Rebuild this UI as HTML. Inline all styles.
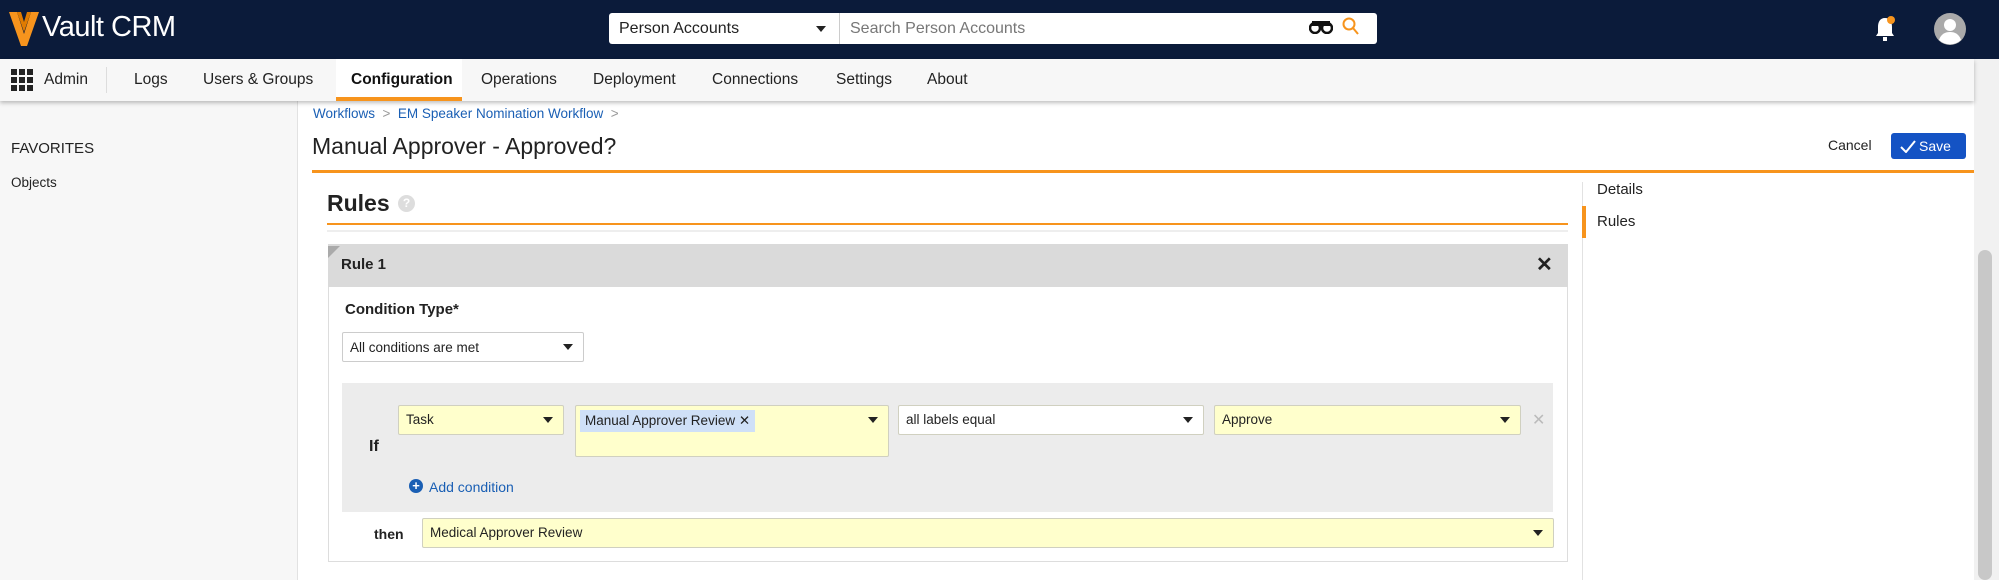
<!DOCTYPE html>
<html><head><meta charset="utf-8"><style>
*{box-sizing:border-box;margin:0;padding:0}
body{width:1999px;height:580px;overflow:hidden;background:#fff;font-family:"Liberation Sans",Arial,sans-serif;color:#222;position:relative}
.a{position:absolute}
.top{left:0;top:0;width:1999px;height:59px;background:#0b1b3a}
.nav{left:0;top:59px;width:1974px;height:42px;background:#f7f7f7;box-shadow:0 2px 4px rgba(0,0,0,.25);z-index:2}
.nav span{position:absolute;top:12px;font-size:15.5px;color:#222}
.sel{background:#ffffcc;border:1px solid #d0d0c0;border-radius:2px;font-size:13.5px;padding:6px 7px}
.sel .ar,.ar{position:absolute;right:10px;top:11px;width:0;height:0;border-left:5px solid transparent;border-right:5px solid transparent;border-top:6px solid #222}
</style></head><body>
<div class="a top"></div>
<svg class="a" style="left:9px;top:12px" width="30" height="34" viewBox="0 0 30 34"><path d="M0 0h8l7 22 7-22h8L18 34h-6z" fill="#f7941d"/><path d="M8 0h4l3 10 3-10h4l-7 20z" fill="#e07b00"/></svg>
<div class="a" style="left:42px;top:11px;font-size:29px;color:#fff;letter-spacing:-0.5px"><span>Vault</span><span style="font-weight:300"> CRM</span></div>
<div class="a" style="left:609px;top:13px;width:768px;height:31px;background:#fff;border-radius:3px"></div>
<div class="a" style="left:839px;top:13px;width:1px;height:31px;background:#ccc"></div>
<div class="a" style="left:619px;top:20px;font-size:16px;color:#222">Person Accounts</div>
<div class="a ar" style="left:816px;top:26px"></div>
<div class="a" style="left:850px;top:20px;font-size:16px;color:#777">Search Person Accounts</div>
<svg class="a" style="left:1309px;top:20px" width="24" height="14" viewBox="0 0 24 14"><circle cx="6" cy="8" r="5" fill="none" stroke="#111" stroke-width="2.5"/><circle cx="18" cy="8" r="5" fill="none" stroke="#111" stroke-width="2.5"/><rect x="3" y="1" width="18" height="5" fill="#111"/></svg>
<svg class="a" style="left:1342px;top:17px" width="18" height="20" viewBox="0 0 18 20"><circle cx="7" cy="7" r="5.5" fill="none" stroke="#f7941d" stroke-width="2"/><path d="M11 11l5 6" stroke="#f7941d" stroke-width="2"/></svg>
<svg class="a" style="left:1873px;top:15px" width="24" height="28" viewBox="0 0 24 28"><path d="M12 3c-5 0-7 4-7 9v6l-2 3h18l-2-3v-6c0-5-2-9-7-9z" fill="#fff"/><rect x="10" y="22" width="4" height="4" fill="#fff"/><circle cx="18" cy="5" r="4" fill="#f7941d"/></svg>
<svg class="a" style="left:1934px;top:13px" width="32" height="32" viewBox="0 0 32 32"><circle cx="16" cy="16" r="16" fill="#aaa"/><circle cx="16" cy="12" r="6" fill="#fff"/><path d="M5 27c2-6 6-8 11-8s9 2 11 8a16 16 0 0 1-22 0z" fill="#fff"/></svg>

<div class="a nav">
<svg style="position:absolute;left:11px;top:10px" width="23" height="23" viewBox="0 0 23 23" fill="#222"><rect x="0" y="0" width="6" height="6"/><rect x="8" y="0" width="6" height="6"/><rect x="16" y="0" width="6" height="6"/><rect x="0" y="8" width="6" height="6"/><rect x="8" y="8" width="6" height="6"/><rect x="16" y="8" width="6" height="6"/><rect x="0" y="16" width="6" height="6"/><rect x="8" y="16" width="6" height="6"/><rect x="16" y="16" width="6" height="6"/></svg>
<span style="left:44px">Admin</span>
<div style="position:absolute;left:106px;top:8px;width:1px;height:26px;background:#ddd"></div>
<span style="left:134px">Logs</span>
<span style="left:203px">Users &amp; Groups</span>
<div style="position:absolute;left:336px;top:0;width:126px;height:42px;background:#fff;border-bottom:4px solid #f7941d"></div>
<span style="left:351px;font-weight:bold;color:#111">Configuration</span>
<span style="left:481px">Operations</span>
<span style="left:593px">Deployment</span>
<span style="left:712px">Connections</span>
<span style="left:836px">Settings</span>
<span style="left:927px">About</span>
</div>
<div class="a" style="left:1974px;top:59px;width:25px;height:521px;background:#f1f1f1"></div>
<div class="a" style="left:1978px;top:250px;width:14px;height:330px;background:#c8c8c8;border-radius:7px"></div>

<div class="a" style="left:0;top:101px;width:298px;height:479px;background:#f7f7f7;border-right:1px solid #e2e2e2"></div>
<div class="a" style="left:11px;top:140px;font-size:15px">FAVORITES</div>
<div class="a" style="left:11px;top:175px;font-size:13.5px">Objects</div>

<div class="a" style="left:313px;top:106px;font-size:13.5px;color:#1a5fb4">Workflows <span style="color:#999">&nbsp;&gt;&nbsp;</span> EM Speaker Nomination Workflow <span style="color:#999">&nbsp;&gt;</span></div>
<div class="a" style="left:312px;top:133px;font-size:23px;color:#222">Manual Approver - Approved?</div>
<div class="a" style="left:1828px;top:137px;font-size:14px">Cancel</div>
<div class="a" style="left:1891px;top:133px;width:75px;height:26px;background:#1453c4;border-radius:3px;color:#fff;font-size:14px;padding:5px 0 0 28px">Save</div>
<svg class="a" style="left:1900px;top:140px" width="16" height="13" viewBox="0 0 16 13"><path d="M1 7l5 5L15 1" stroke="#fff" stroke-width="2" fill="none"/></svg>
<div class="a" style="left:312px;top:170px;width:1662px;height:3px;background:#f7941d"></div>

<div class="a" style="left:1582px;top:182px;width:1px;height:398px;background:#e2e2e2"></div>
<div class="a" style="left:1597px;top:181px;font-size:15px">Details</div>
<div class="a" style="left:1582px;top:206px;width:4px;height:32px;background:#f7941d"></div>
<div class="a" style="left:1597px;top:213px;font-size:15px">Rules</div>

<div class="a" style="left:327px;top:190px;font-size:23px;font-weight:bold">Rules</div>
<div class="a" style="left:398px;top:195px;width:17px;height:17px;border-radius:50%;background:#ddd;color:#fff;font-size:12px;text-align:center;line-height:17px;font-weight:bold">?</div>
<div class="a" style="left:327px;top:223px;width:1241px;height:2px;background:#f7941d"></div>
<div class="a" style="left:327px;top:230px;width:1241px;height:2px;background:#eee"></div>

<div class="a" style="left:328px;top:244px;width:1240px;height:318px;border:1px solid #ddd;background:#fff"></div>
<div class="a" style="left:328px;top:244px;width:1240px;height:43px;background:#dadada"></div>
<div class="a" style="left:328px;top:246px;width:0;height:0;border-top:12px solid #aaa;border-right:12px solid transparent"></div>
<div class="a" style="left:341px;top:256px;font-size:15px;font-weight:bold">Rule 1</div>
<div class="a" style="left:1536px;top:252px;font-size:20px;font-weight:bold">&#x2715;</div>
<div class="a" style="left:345px;top:301px;font-size:15px;font-weight:bold">Condition Type*</div>
<div class="a sel" style="left:342px;top:332px;width:242px;height:30px;background:#fff;border-color:#ccc;padding-top:7px">All conditions are met<div class="ar"></div></div>

<div class="a" style="left:342px;top:383px;width:1211px;height:129px;background:#ececec"></div>
<div class="a sel" style="left:398px;top:405px;width:166px;height:30px">Task<div class="ar"></div></div>
<div class="a sel" style="left:575px;top:405px;width:314px;height:52px;padding:4px"><span style="background:#cfe0f7;padding:3px 5px;display:inline-block">Manual Approver Review &#x2715;</span><div class="ar"></div></div>
<div class="a sel" style="left:898px;top:405px;width:306px;height:30px;background:#fff">all labels equal<div class="ar"></div></div>
<div class="a sel" style="left:1214px;top:405px;width:307px;height:30px">Approve<div class="ar"></div></div>
<div class="a" style="left:1532px;top:410px;font-size:16px;color:#bbb">&#x2715;</div>
<div class="a" style="left:369px;top:438px;font-size:16px;font-weight:bold">If</div>
<div class="a" style="left:409px;top:479px;width:14px;height:14px;border-radius:50%;background:#1a5fb4;color:#fff;font-size:13px;line-height:14px;text-align:center;font-weight:bold">+</div>
<div class="a" style="left:429px;top:479px;font-size:14px;color:#1a5fb4">Add condition</div>
<div class="a" style="left:374px;top:526px;font-size:14px;font-weight:bold">then</div>
<div class="a sel" style="left:422px;top:518px;width:1132px;height:30px">Medical Approver Review<div class="ar"></div></div>
</body></html>
